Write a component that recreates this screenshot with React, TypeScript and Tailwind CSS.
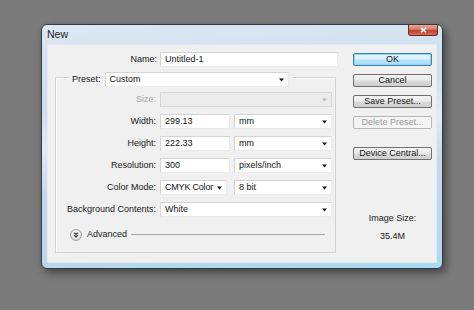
import type { ReactNode } from 'react'

function Arrow({ disabled }: { disabled?: boolean }) {
  return (
    <svg width="5" height="4" viewBox="0 0 5 4" className="shrink-0">
      <path d="M0 0.5H5L2.5 3.6Z" fill={disabled ? '#b8b8b8' : '#151515'} />
    </svg>
  )
}

function Field({ value, className = '' }: { value: string; className?: string }) {
  return (
    <div className={`h-[15px] bg-white border border-t-[#d4d4d4] border-l-[#d4d4d4] border-r-[#ececec] border-b-[#ececec] pl-[4px] leading-[13px] text-[#141414] ${className}`}>
      {value}
    </div>
  )
}

function Select({ value, className = '', disabled }: { value: string; className?: string; disabled?: boolean }) {
  return (
    <div
      className={`h-[15px] flex items-center justify-between pl-[4px] pr-[4px] border leading-[13px] ${
        disabled
          ? 'bg-[#ececec] border-[#d6d6d6] text-[#a0a0a0]'
          : 'bg-white border-t-[#d4d4d4] border-l-[#d4d4d4] border-r-[#ececec] border-b-[#ececec] text-[#141414]'
      } ${className}`}
    >
      <span className="whitespace-nowrap">{value}</span>
      <Arrow disabled={disabled} />
    </div>
  )
}

function Row({ label, children, disabled }: { label: string; children: ReactNode; disabled?: boolean }) {
  return (
    <div className="flex items-center h-[15px]">
      <div className={`w-[101px] text-right pr-[1px] ${disabled ? 'text-[#a3a3a3]' : 'text-[#181818]'}`}>{label}</div>
      <div className="ml-[3px] flex items-center">{children}</div>
    </div>
  )
}

function Button({ children, variant = 'normal', className = '' }: { children: ReactNode; variant?: 'normal' | 'default' | 'disabled'; className?: string }) {
  const styles = {
    normal: 'border-[#707070] bg-[linear-gradient(#f3f3f3_0%,#ebebeb_48%,#dcdcdc_52%,#cfcfcf_100%)] text-[#141414]',
    default: 'border-[#3c7fb1] bg-[linear-gradient(#eaf6fd_0%,#d9f0fc_48%,#bee6fd_52%,#a7d9f5_100%)] text-[#141414] shadow-[inset_0_0_0_1px_#8ed6f7]',
    disabled: 'border-[#b5b8ba] bg-[#f4f4f4] text-[#9a9a9a]',
  }[variant]
  return (
    <div className={`w-[79px] h-[13px] rounded-[2px] border flex items-center justify-center leading-none ${styles} ${className}`}>
      {children}
    </div>
  )
}

function AdvancedIcon() {
  return (
    <svg width="12" height="12" viewBox="0 0 12 12" className="shrink-0">
      <defs>
        <linearGradient id="adv" x1="0" y1="0" x2="0" y2="1">
          <stop offset="0" stopColor="#ffffff" />
          <stop offset="1" stopColor="#dcdcdc" />
        </linearGradient>
      </defs>
      <circle cx="6" cy="6" r="5.4" fill="url(#adv)" stroke="#8e8e8e" strokeWidth="0.9" />
      <path d="M4 3.6L6 5.4L8 3.6M4 6.2L6 8L8 6.2" stroke="#2a2a2a" fill="none" strokeWidth="1.1" />
    </svg>
  )
}

export default function App() {
  return (
    <div className="w-[474px] h-[310px] bg-[#7b7b7b] pt-[24px] pl-[41px] font-['Liberation_Sans',Arial,sans-serif] text-[9px]">
      {/* window */}
      <div className="w-[402px] h-[245px] rounded-[6px] border border-[#2f3b45] bg-[linear-gradient(175deg,#dce8f3_0%,#cddeee_30%,#e2ecf6_45%,#c6d9eb_60%,#bad7ea_88%,#a6ddf0_100%)] shadow-[3px_4px_9px_rgba(0,0,0,0.45)] flex flex-col">
        {/* title bar */}
        <div className="h-[19px] flex items-start justify-between pl-[5px] pr-[4px]">
          <div className="pt-[4px] text-[10.5px] text-[#1b1b1b] leading-none">New</div>
          <div className="w-[30px] h-[11px] rounded-b-[3px] border border-t-0 border-[#6b2a22] bg-[linear-gradient(#e9a99c_0%,#d77463_45%,#c2402c_55%,#d0705c_100%)] flex items-center justify-center">
            <svg width="7" height="6" viewBox="0 0 7 6">
              <path d="M1 0.8L6 5.2M6 0.8L1 5.2" stroke="#ffffff" strokeWidth="1.6" />
            </svg>
          </div>
        </div>

        {/* content */}
        <div className="mx-[5px] h-[219px] bg-[#f0f0f0] border border-[#e2ebf3] flex">
          {/* left */}
          <div className="w-[298px] flex flex-col">
            <div className="mt-[7px] flex items-center h-[15px]">
              <div className="w-[109px] text-right text-[#181818]">Name:</div>
              <Field value="Untitled-1" className="ml-[3px] w-[178px]" />
            </div>

            <div className="mt-[10px] ml-[7px] w-[281px] h-[176px] border border-[#d2d2d2] shadow-[inset_1px_1px_0_#ffffff] flex flex-col">
              <div className="-mt-[6px] ml-[13px] self-start bg-[#f0f0f0] pl-[3px] pr-[4px] flex items-center h-[15px]">
                <span className="text-[#181818]">Preset:</span>
                <Select value="Custom" className="ml-[4px] w-[184px]" />
              </div>

              <div className="mt-[5px] flex flex-col gap-[7px]">
                <Row label="Size:" disabled>
                  <Select value="" disabled className="w-[172px]" />
                </Row>
                <Row label="Width:">
                  <Field value="299.13" className="w-[70px]" />
                  <Select value="mm" className="ml-[4px] w-[98px]" />
                </Row>
                <Row label="Height:">
                  <Field value="222.33" className="w-[70px]" />
                  <Select value="mm" className="ml-[4px] w-[98px]" />
                </Row>
                <Row label="Resolution:">
                  <Field value="300" className="w-[70px]" />
                  <Select value="pixels/inch" className="ml-[4px] w-[98px]" />
                </Row>
                <Row label="Color Mode:">
                  <Select value="CMYK Color" className="w-[67px] tracking-[-0.2px]" />
                  <Select value="8 bit" className="ml-[7px] w-[98px]" />
                </Row>
                <Row label="Background Contents:">
                  <Select value="White" className="w-[172px]" />
                </Row>
              </div>

              <div className="mt-[11px] ml-[14px] flex items-center">
                <AdvancedIcon />
                <span className="ml-[5px] text-[#181818]">Advanced</span>
                <div className="ml-[4px] w-[194px] h-px bg-[#a8a8a8]" />
              </div>
            </div>
          </div>

          {/* right */}
          <div className="ml-[7px] flex flex-col items-center w-[79px]">
            <Button variant="default" className="mt-[8px]">OK</Button>
            <Button className="mt-[8px]">Cancel</Button>
            <Button className="mt-[8px]">Save Preset...</Button>
            <Button variant="disabled" className="mt-[8px]">Delete Preset...</Button>
            <Button className="mt-[18px]">Device Central...</Button>
            <div className="mt-[52px] text-[#181818]">Image Size:</div>
            <div className="mt-[4px] text-[#181818]">35.4M</div>
          </div>
        </div>
      </div>
    </div>
  )
}
